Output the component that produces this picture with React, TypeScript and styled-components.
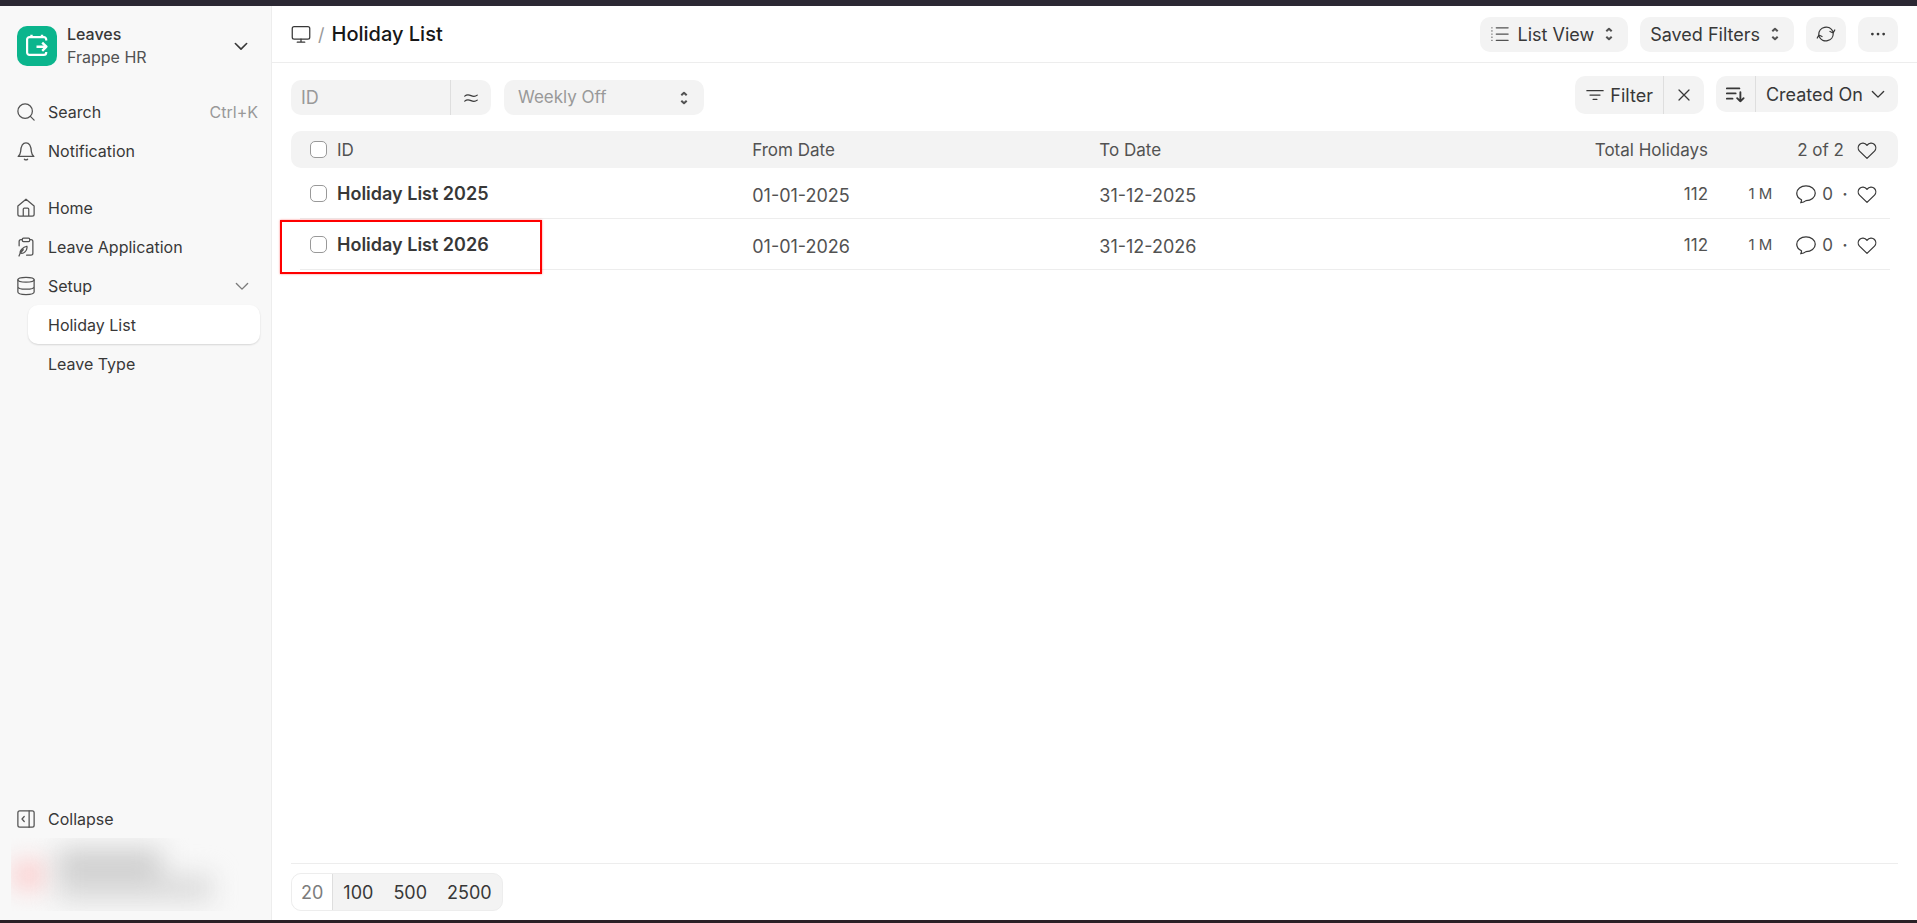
import React from 'react';
import styled, { createGlobalStyle, css } from 'styled-components';

const ink = '#383838';
const muted = '#525252';
const faint = '#999999';
const fill = '#f3f3f3';
const line = '#ededed';

const GlobalStyle = createGlobalStyle`
  *, *::before, *::after { box-sizing: border-box; }
  body { margin: 0; font-family: Inter, 'Liberation Sans', sans-serif; font-size: 16px; color: ${ink}; background: #fff; }
  button, input, select { font: inherit; color: inherit; }
  a { color: inherit; text-decoration: none; }
  svg { display: block; flex: none; }
`;

const Page = styled.div`
  min-height: 100vh;
  display: flex;
  flex-direction: column;
  border-top: 6px solid #2b2833;
  border-bottom: 3px solid #2a2026;
`;

const Shell = styled.div`
  flex: 1;
  display: flex;
`;

/* ---------- sidebar ---------- */

const Sidebar = styled.aside`
  width: 272px;
  flex: none;
  display: flex;
  flex-direction: column;
  background: #f8f8f8;
  border-right: 1px solid ${line};
  padding: 20px 11px 9px;
`;

const AppSwitcher = styled.button`
  display: flex;
  align-items: center;
  gap: 10px;
  border: 0;
  background: none;
  padding: 0 9px 0 6px;
  height: 40px;
  text-align: left;
`;

const AppNames = styled.span`
  flex: 1;
  display: flex;
  flex-direction: column;
  line-height: 23px;
`;

const AppName = styled.span`
  font-weight: 500;
`;

const AppVendor = styled.span`
  color: ${muted};
`;

const Nav = styled.nav<{ $top: number }>`
  display: flex;
  flex-direction: column;
  margin-top: ${(p) => p.$top}px;
`;

const navItem = css`
  display: flex;
  align-items: center;
  gap: 12px;
  height: 39px;
  border: 0;
  border-radius: 10px;
  background: none;
  text-align: left;
`;

const NavLink = styled.a`
  ${navItem}
  padding: 0 2px 0 5px;
`;

const NavButton = styled.button<{ $expandable?: boolean }>`
  ${navItem}
  padding: 0 ${(p) => (p.$expandable ? 8 : 2)}px 0 5px;
`;

const NavLabel = styled.span`
  flex: 1;
`;

const Shortcut = styled.kbd`
  font-family: inherit;
  color: ${faint};
`;

const SubLink = styled.a<{ $active?: boolean }>`
  display: flex;
  align-items: center;
  height: 39px;
  margin-left: 17px;
  padding: 0 20px;
  border-radius: 10px;
  ${(p) => p.$active && css`
    background: #fff;
    box-shadow: 0 1px 2px rgba(0, 0, 0, 0.14);
  `}
`;

const SidebarFoot = styled.div`
  margin-top: auto;
`;

const HiddenUser = styled.div`
  height: 73px;
  overflow: hidden;
  display: flex;
  align-items: center;
  gap: 10px;
`;

const HiddenAvatar = styled.div`
  width: 36px;
  height: 32px;
  border-radius: 8px;
  background: #fbd6d6;
  filter: blur(11px);
`;

const HiddenLines = styled.div`
  display: flex;
  flex-direction: column;
  filter: blur(13px);
`;

const HiddenLine = styled.div<{ $width: number; $color: string }>`
  width: ${(p) => p.$width}px;
  height: 26px;
  background: ${(p) => p.$color};
`;

/* ---------- main column ---------- */

const Main = styled.main`
  flex: 1;
  min-width: 0;
  display: flex;
  flex-direction: column;
`;

const PageHead = styled.header`
  display: flex;
  align-items: center;
  justify-content: space-between;
  height: 57px;
  padding: 0 19px;
  border-bottom: 1px solid ${line};
`;

const Crumbs = styled.div`
  display: flex;
  align-items: center;
  gap: 7px;
  font-size: 18px;
  color: ${faint};
`;

const Title = styled.h1`
  margin: 0;
  font-size: 20px;
  line-height: 24px;
  font-weight: 500;
  color: #171717;
`;

const Actions = styled.div`
  display: flex;
  gap: 12px;
`;

const SoftButton = styled.button<{ $square?: boolean }>`
  display: flex;
  align-items: center;
  justify-content: center;
  gap: 8px;
  height: 35px;
  padding: ${(p) => (p.$square ? '0' : '0 12px 0 10px')};
  ${(p) => p.$square && 'width: 40px;'}
  border: 0;
  border-radius: 10px;
  background: ${fill};
  font-size: 18px;
`;

const Toolbar = styled.div`
  display: flex;
  justify-content: space-between;
  align-items: flex-start;
  padding: 13px 19px 16px;
`;

const Filters = styled.div`
  display: flex;
  gap: 13px;
  padding-top: 4px;
`;

const Group = styled.div`
  display: flex;
  align-self: flex-start;
  border-radius: 10px;
  background: ${fill};
  overflow: hidden;
`;

const GroupButton = styled.button<{ $width?: number; $height: number }>`
  display: flex;
  align-items: center;
  justify-content: center;
  gap: 5px;
  height: ${(p) => p.$height}px;
  ${(p) => (p.$width ? `width: ${p.$width}px; padding: 0;` : 'padding: 0 10px;')}
  border: 0;
  background: none;
  font-size: 18px;

  & + &, input + & { border-left: 1px solid #dedede; }
`;

const TextInput = styled.input`
  width: 159px;
  height: 35px;
  padding: 0 10px;
  border: 0;
  background: none;
  font-size: 18px;
  &::placeholder { color: ${faint}; opacity: 1; }
`;

const SelectWrap = styled.label`
  position: relative;
  display: block;
  width: 200px;

  svg {
    position: absolute;
    right: 13px;
    top: 11px;
    pointer-events: none;
  }
`;

const Select = styled.select`
  appearance: none;
  width: 100%;
  height: 35px;
  padding: 0 14px 2px;
  border: 0;
  border-radius: 10px;
  background: ${fill};
  color: ${faint};
  font-size: 17px;
`;

/* ---------- table ---------- */

const TableArea = styled.div`
  position: relative;
  flex: 1;
  padding: 0 19px;
`;

const Table = styled.table`
  width: 100%;
  table-layout: fixed;
  border-collapse: separate;
  border-spacing: 0;
  font-size: 17px;
  color: ${muted};
`;

const HeadCell = styled.th<{ $right?: boolean }>`
  height: 37px;
  padding: 0;
  font-weight: 400;
  text-align: ${(p) => (p.$right ? 'right' : 'left')};
  background: ${fill};
  &:first-child { border-radius: 10px 0 0 10px; }
  &:last-child { border-radius: 0 10px 10px 0; }
`;

const Row = styled.tr`
  background: linear-gradient(${line}, ${line}) no-repeat 9px 100% / calc(100% - 17px) 1px;
`;

const Cell = styled.td<{ $right?: boolean }>`
  height: 51px;
  padding: 0;
  text-align: ${(p) => (p.$right ? 'right' : 'left')};
`;

const DateCell = styled(Cell)`
  padding-top: 4px;
  font-size: 18px;
`;

const IdCell = styled.div`
  display: flex;
  align-items: center;
  gap: 10px;
  padding-left: 19px;
`;

const Check = styled.input`
  appearance: none;
  width: 17px;
  height: 17px;
  margin: 0;
  border: 1px solid #999;
  border-radius: 5px;
  background: #fff;
`;

const DocLink = styled.a`
  font-size: 18px;
  font-weight: 600;
  color: ${ink};
`;

const Meta = styled.div`
  display: flex;
  align-items: center;
  justify-content: flex-end;
  padding-right: 21px;
`;

const Age = styled.span`
  margin-right: 24px;
  font-size: 15px;
`;

const Comments = styled.span`
  display: flex;
  align-items: center;
  gap: 6px;
`;

const Dot = styled.span`
  width: 24px;
  text-align: center;
  font-weight: 600;
`;

const IconButton = styled.button`
  padding: 0;
  border: 0;
  background: none;
`;

const Count = styled.span`
  margin-right: 13px;
`;

const Highlight = styled.div`
  position: absolute;
  left: 8px;
  top: 89px;
  width: 262px;
  height: 54px;
  border: 2px solid #f00;
  box-shadow: 0 0 2px rgba(255, 0, 0, 0.5);
  pointer-events: none;
`;

const Footer = styled.footer`
  margin: 0 19px;
  padding: 9px 0;
  border-top: 1px solid ${line};
  display: flex;
`;

const Pager = styled.div`
  display: flex;
  border: 1px solid ${line};
  border-radius: 10px;
  overflow: hidden;
  background: ${fill};
`;

const PageSize = styled.button<{ $active?: boolean }>`
  height: 36px;
  padding: 0 10px;
  border: 0;
  background: none;
  font-size: 18px;
  ${(p) => p.$active && css`
    padding: 0 9px;
    border-right: 1px solid #dedede;
    background: #fff;
    color: #7c7c7c;
  `}
`;

/* ---------- icons ---------- */

type IconProps = { size?: number; w?: number; vb?: string; color?: string; children: React.ReactNode };

const Icon = ({ size = 20, w = 1, vb = '0 0 16 16', color = ink, children }: IconProps) => (
  <svg width={size} height={size} viewBox={vb} fill="none" stroke={color} strokeWidth={w}
    strokeLinecap="round" strokeLinejoin="round" aria-hidden="true">{children}</svg>
);

const AppLogo = () => (
  <svg width="40" height="40" viewBox="0 0 40 40" fill="none" stroke="#fff" strokeWidth="2.2" strokeLinejoin="round" aria-hidden="true">
    <rect width="40" height="40" rx="10" fill="#0bb58d" stroke="none" />
    <path d="M29.200 14.500v-1a2.400 2.400 0 0 0-2.400-2.400H12.500a2.400 2.400 0 0 0-2.400 2.400v13a2.400 2.400 0 0 0 2.400 2.400h14.300a2.400 2.400 0 0 0 2.400-2.400v-.5" />
    <path d="M14.500 8.800v2.200M25 8.800v2.200M19.500 20.700h9" strokeWidth="2.400" />
    <path d="M25.200 16.600l4.200 4.100-4.200 4.100" strokeWidth="2.400" />
  </svg>
);

const SearchIcon = () => <Icon color={muted}><circle cx="7.300" cy="7.300" r="5.800" /><path d="M11.500 11.500l3 3" /></Icon>;
const BellIcon = () => <Icon color={muted}><path d="M1.700 12.300h12.600c-1.400-1.100-1.800-2-2-3.800-.2-3.500-.9-7-4.300-7s-4.100 3.500-4.300 7c-.2 1.800-.6 2.700-2 3.800zM6.700 14.600c.7.700 1.900.7 2.600 0" /></Icon>;
const HomeIcon = () => <Icon color={muted}><path d="M1.500 6.400L8 1l6.500 5.400v6.600a1.500 1.500 0 0 1-1.500 1.500H3A1.500 1.500 0 0 1 1.500 13zM5.800 14.500V9a.9.900 0 0 1 .9-.9h2.600a.9.900 0 0 1 .9.900v5.500" /></Icon>;
const ClipboardIcon = () => (
  <Icon color={muted}>
    <path d="M2.500 7V3.500A1.500 1.500 0 0 1 4 2h1M11 2h1a1.500 1.500 0 0 1 1.500 1.500V13a1.500 1.500 0 0 1-1.500 1.500H8.500" />
    <rect x="5" y=".8" width="6" height="2.800" rx="1" />
    <path d="M2.400 15.200l1-2.400c-.4-1 .2-1.900 1-2.800 1.200-1.300 2.500-2.300 4.300-2.600.4 1.800-.3 3.300-1.500 4.500-1 1-2.200 1.700-3.800.9M3.400 12.800l2.400-2.600" />
  </Icon>
);
const StackIcon = () => <Icon color={muted}><ellipse cx="8" cy="3" rx="6.500" ry="1.900" /><path d="M1.500 3v9.800c0 1.200 2.900 2 6.500 2s6.500-.8 6.500-2V3M1.500 8.500c0 1.200 2.900 2 6.500 2s6.500-.8 6.500-2" /></Icon>;
const CollapseIcon = () => <Icon color={muted}><rect x="1.500" y="1.500" width="13" height="13" rx="1.500" /><path d="M10.500 1.500v13M6.600 6L4.800 8l1.800 2" /></Icon>;
const ChevronDown = ({ color = ink, w = 1.1 }: { color?: string; w?: number }) => <Icon color={color} w={w}><path d="M3.500 6L8 10.500 12.500 6" /></Icon>;
const UpDown = () => <Icon size={14} w={2} color={muted} vb="0 0 14 14"><path d="M4.300 4.300L7 1.700l2.700 2.600M4.300 9.700L7 12.300l2.700-2.600" strokeLinecap="butt" /></Icon>;
const MonitorIcon = () => <Icon><rect x="1" y="2" width="14" height="10" rx="1.500" /><path d="M8 12v2.500M5 14.500h6" /></Icon>;
const ListIcon = () => <Icon color={muted}><path d="M5 3h9.500M5 8h9.500M5 13h9.500M1.500 3h.1M1.500 5.500h.1M1.500 8h.1M1.500 10.500h.1M1.500 13h.1" /></Icon>;
const RefreshIcon = () => <Icon><path d="M2.200 8.500A5.900 5.900 0 0 1 13.500 6M13.800 7.500A5.900 5.900 0 0 1 2.500 10M15 4.800L13.700 7.200 11.200 6M1 11.200l1.300-2.400L4.800 10" /></Icon>;
const DotsIcon = () => <Icon color="none"><g fill={ink}><circle cx="3.500" cy="8" r="1.100" /><circle cx="8" cy="8" r="1.100" /><circle cx="12.500" cy="8" r="1.100" /></g></Icon>;
const FilterIcon = () => <Icon><path d="M1.500 4.500h13M4 8h8M6.500 11.500h3" /></Icon>;
const CloseIcon = () => <Icon><path d="M4 4l8 8M12 4l-8 8" /></Icon>;
const SortIcon = () => <Icon w={1.500}><path d="M1.500 3.500h10M1.500 7.500h7M1.500 11.700h4.500M12.300 6.500v7.300M9.700 11.300l2.600 2.600 2.600-2.600" /></Icon>;
const ApproxIcon = () => <Icon><path d="M3 6.500c1.700-1.500 3.300-1.200 5-.4s3.300 1 5-.4M3 10.500c1.700-1.500 3.300-1.200 5-.4s3.300 1 5-.4" /></Icon>;
const HeartIcon = () => <Icon><path d="M8 14.700L2 8.900C.6 7.400.7 5 2 3.600c1.600-1.600 4.200-1.600 6 .6 1.800-2.200 4.400-2.200 6-.6 1.300 1.400 1.400 3.800 0 5.300z" /></Icon>;
const CommentIcon = () => <Icon><path d="M3.800 15c.5-.9.700-1.600.6-2.400C2.200 11.600.6 9.700.6 7.400.6 4.100 3.900 1.500 8 1.500s7.400 2.600 7.400 5.900-3.300 5.900-7.400 5.900C6.800 14.300 5.400 14.800 3.800 15z" /></Icon>;

/* ---------- data ---------- */

const rows = [
  { name: 'Holiday List 2025', from: '01-01-2025', to: '31-12-2025', total: 112 },
  { name: 'Holiday List 2026', from: '01-01-2026', to: '31-12-2026', total: 112 },
];

export default function App() {
  return (
    <>
      <GlobalStyle />
      <Page>
        <Shell>
          <Sidebar>
            <AppSwitcher>
              <AppLogo />
              <AppNames>
                <AppName>Leaves</AppName>
                <AppVendor>Frappe HR</AppVendor>
              </AppNames>
              <ChevronDown w={1.300} />
            </AppSwitcher>
            <Nav $top={26}>
              <NavButton><SearchIcon /><NavLabel>Search</NavLabel><Shortcut>Ctrl+K</Shortcut></NavButton>
              <NavButton><BellIcon /><NavLabel>Notification</NavLabel></NavButton>
            </Nav>
            <Nav $top={18}>
              <NavLink href="#home"><HomeIcon /><NavLabel>Home</NavLabel></NavLink>
              <NavLink href="#leave-application"><ClipboardIcon /><NavLabel>Leave Application</NavLabel></NavLink>
              <NavButton $expandable><StackIcon /><NavLabel>Setup</NavLabel><ChevronDown color="#7c7c7c" /></NavButton>
              <SubLink href="#holiday-list" $active>Holiday List</SubLink>
              <SubLink href="#leave-type">Leave Type</SubLink>
            </Nav>
            <SidebarFoot>
              <Nav $top={0}>
                <NavButton><CollapseIcon /><NavLabel>Collapse</NavLabel></NavButton>
              </Nav>
              <HiddenUser>
                <HiddenAvatar />
                <HiddenLines>
                  <HiddenLine $width={105} $color="#cecece" />
                  <HiddenLine $width={155} $color="#dadada" />
                </HiddenLines>
              </HiddenUser>
            </SidebarFoot>
          </Sidebar>

          <Main>
            <PageHead>
              <Crumbs>
                <MonitorIcon />
                <span>/</span>
                <Title>Holiday List</Title>
              </Crumbs>
              <Actions>
                <SoftButton><ListIcon />List View<UpDown /></SoftButton>
                <SoftButton>Saved Filters<UpDown /></SoftButton>
                <SoftButton $square aria-label="Refresh"><RefreshIcon /></SoftButton>
                <SoftButton $square aria-label="Menu"><DotsIcon /></SoftButton>
              </Actions>
            </PageHead>

            <Toolbar>
              <Filters>
                <Group>
                  <TextInput placeholder="ID" aria-label="ID" />
                  <GroupButton $width={41} $height={35} aria-label="Like"><ApproxIcon /></GroupButton>
                </Group>
                <SelectWrap>
                  <Select aria-label="Weekly Off"><option>Weekly Off</option></Select>
                  <UpDown />
                </SelectWrap>
              </Filters>
              <Actions>
                <Group>
                  <GroupButton $height={38}><FilterIcon />Filter</GroupButton>
                  <GroupButton $height={38} $width={41} aria-label="Clear filters"><CloseIcon /></GroupButton>
                </Group>
                <Group>
                  <GroupButton $height={36} $width={39} aria-label="Sort direction"><SortIcon /></GroupButton>
                  <GroupButton $height={36}>Created On<ChevronDown /></GroupButton>
                </Group>
              </Actions>
            </Toolbar>

            <TableArea>
              <Table>
                <colgroup>
                  <col style={{ width: '28.7%' }} />
                  <col style={{ width: '21.6%' }} />
                  <col style={{ width: '21.6%' }} />
                  <col />
                  <col style={{ width: '190px' }} />
                </colgroup>
                <thead>
                  <tr>
                    <HeadCell scope="col"><IdCell><Check type="checkbox" aria-label="Select all" />ID</IdCell></HeadCell>
                    <HeadCell scope="col">From Date</HeadCell>
                    <HeadCell scope="col">To Date</HeadCell>
                    <HeadCell scope="col" $right>Total Holidays</HeadCell>
                    <HeadCell scope="col">
                      <Meta><Count>2 of 2</Count><IconButton aria-label="Liked"><HeartIcon /></IconButton></Meta>
                    </HeadCell>
                  </tr>
                </thead>
                <tbody>
                  {rows.map((r) => (
                    <Row key={r.name}>
                      <Cell>
                        <IdCell>
                          <Check type="checkbox" aria-label={`Select ${r.name}`} />
                          <DocLink href="#doc">{r.name}</DocLink>
                        </IdCell>
                      </Cell>
                      <DateCell>{r.from}</DateCell>
                      <DateCell>{r.to}</DateCell>
                      <Cell $right>{r.total}</Cell>
                      <Cell>
                        <Meta>
                          <Age>1 M</Age>
                          <Comments><CommentIcon />0</Comments>
                          <Dot>·</Dot>
                          <IconButton aria-label="Like"><HeartIcon /></IconButton>
                        </Meta>
                      </Cell>
                    </Row>
                  ))}
                </tbody>
              </Table>
              <Highlight />
            </TableArea>

            <Footer>
              <Pager>
                <PageSize $active>20</PageSize>
                <PageSize>100</PageSize>
                <PageSize>500</PageSize>
                <PageSize>2500</PageSize>
              </Pager>
            </Footer>
          </Main>
        </Shell>
      </Page>
    </>
  );
}
